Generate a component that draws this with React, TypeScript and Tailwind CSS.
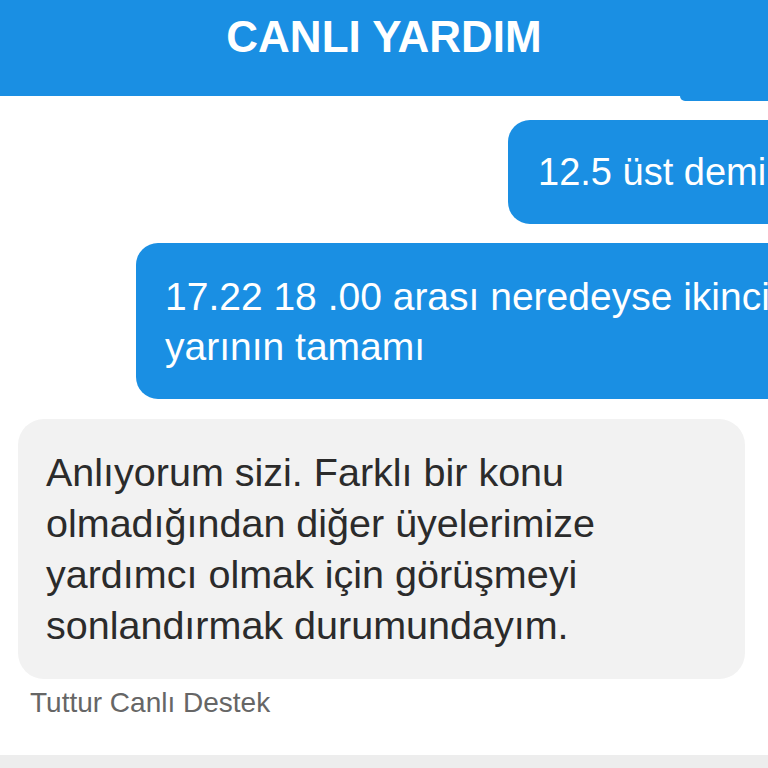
import React from "react";

const font = { fontFamily: '"Liberation Sans", Arial, sans-serif' };

export default function App() {
  return (
    <div className="h-[768px] w-[768px] overflow-hidden bg-white flex flex-col" style={font}>
      {/* Header */}
      <header className="h-[96px] shrink-0 bg-[#1a8fe3] pt-[15px] text-center">
        <h1 className="text-[44px] leading-none font-bold text-white">CANLI YARDIM</h1>
      </header>

      {/* previous bubble peeking under the header */}
      <div className="flex justify-end shrink-0">
        <div className="h-[5px] w-[88px] bg-[#1a8fe3] rounded-bl-[20px]"></div>
      </div>

      {/* Messages */}
      <div className="flex flex-col pt-[19px]">
        <div className="ml-[508px] w-[420px] shrink-0 rounded-[22px] bg-[#1a8fe3] pl-[30px] py-[27px] text-white text-[38px] leading-[50px] whitespace-nowrap">
          12.5 üst demir
        </div>

        <div className="mt-[19px] ml-[136px] w-[720px] shrink-0 rounded-[22px] bg-[#1a8fe3] pl-[29px] pt-[29px] pb-[27px] text-white text-[39px] leading-[50px] whitespace-nowrap">
          <div>17.22 18 .00 arası neredeyse ikinci</div>
          <div>yarının tamamı</div>
        </div>

        <div className="mt-[20px] ml-[18px] w-[727px] rounded-[26px] bg-[#f2f2f2] px-[28px] py-[28px] text-[#2b2b2b] text-[39.5px] leading-[51px]">
          <div>Anlıyorum sizi. Farklı bir konu</div>
          <div>olmadığından diğer üyelerimize</div>
          <div>yardımcı olmak için görüşmeyi</div>
          <div>sonlandırmak durumundayım.</div>
        </div>

        <div className="ml-[30px] mt-[8px] text-[28px] leading-[32px] text-[#666666]">Tuttur Canlı Destek</div>
      </div>

      <div className="flex-1"></div>
      <div className="h-[13px] shrink-0 bg-[#ededed]"></div>
    </div>
  );
}
